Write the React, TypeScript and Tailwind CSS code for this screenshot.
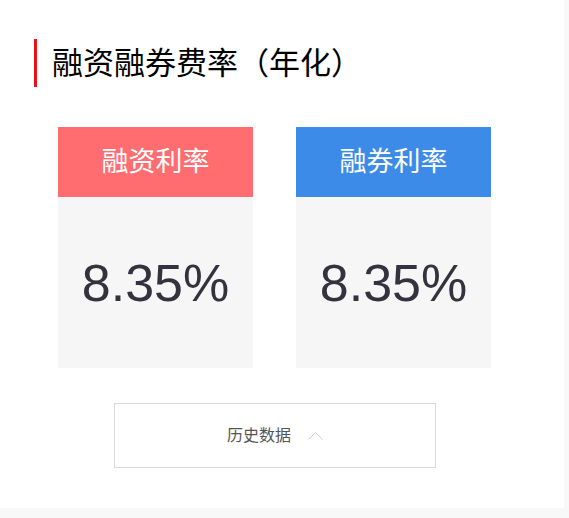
import React from 'react';

interface RateCardProps {
  title: string;
  value: string;
  headerClass: string;
}

const RateCard: React.FC<RateCardProps> = ({ title, value, headerClass }) => (
  <div className="w-[195px] flex flex-col">
    <div className={`h-[70px] flex items-center justify-center text-white text-[27px] ${headerClass}`}>
      {title}
    </div>
    <div className="h-[171px] bg-[#f6f6f6] flex items-center justify-center text-[#33323e] text-[52px] leading-none">
      {value}
    </div>
  </div>
);

const App: React.FC = () => {
  return (
    <div
      className="min-h-[518px] bg-[#f8f8f8]"
      style={{ fontFamily: '"Liberation Sans", "Noto Sans CJK SC", sans-serif' }}
    >
      <div className="w-[564px] h-[508px] bg-white pt-[39px]">
        <div className="flex items-center ml-[34px] h-[48px]">
          <div className="w-[3px] h-[48px] bg-[#e8101a]" />
          <h2 className="ml-[15px] text-[31px] text-black leading-none">融资融券费率（年化）</h2>
        </div>

        <div className="flex gap-[43px] ml-[58px] mt-[40px]">
          <RateCard title="融资利率" value="8.35%" headerClass="bg-[#ff6d71]" />
          <RateCard title="融券利率" value="8.35%" headerClass="bg-[#3d8be8]" />
        </div>

        <button className="ml-[114px] mt-[35px] w-[322px] h-[65px] border border-[#d9d9d9] bg-white flex items-center justify-center gap-[17px]">
          <span className="text-[16px] text-[#555]">历史数据</span>
          <svg width="15" height="8" viewBox="0 0 15 8" fill="none">
            <path d="M0.5 7.5L7.5 0.5L14.5 7.5" stroke="#cfcfcf" strokeWidth="1" />
          </svg>
        </button>
      </div>
    </div>
  );
};

export default App;
